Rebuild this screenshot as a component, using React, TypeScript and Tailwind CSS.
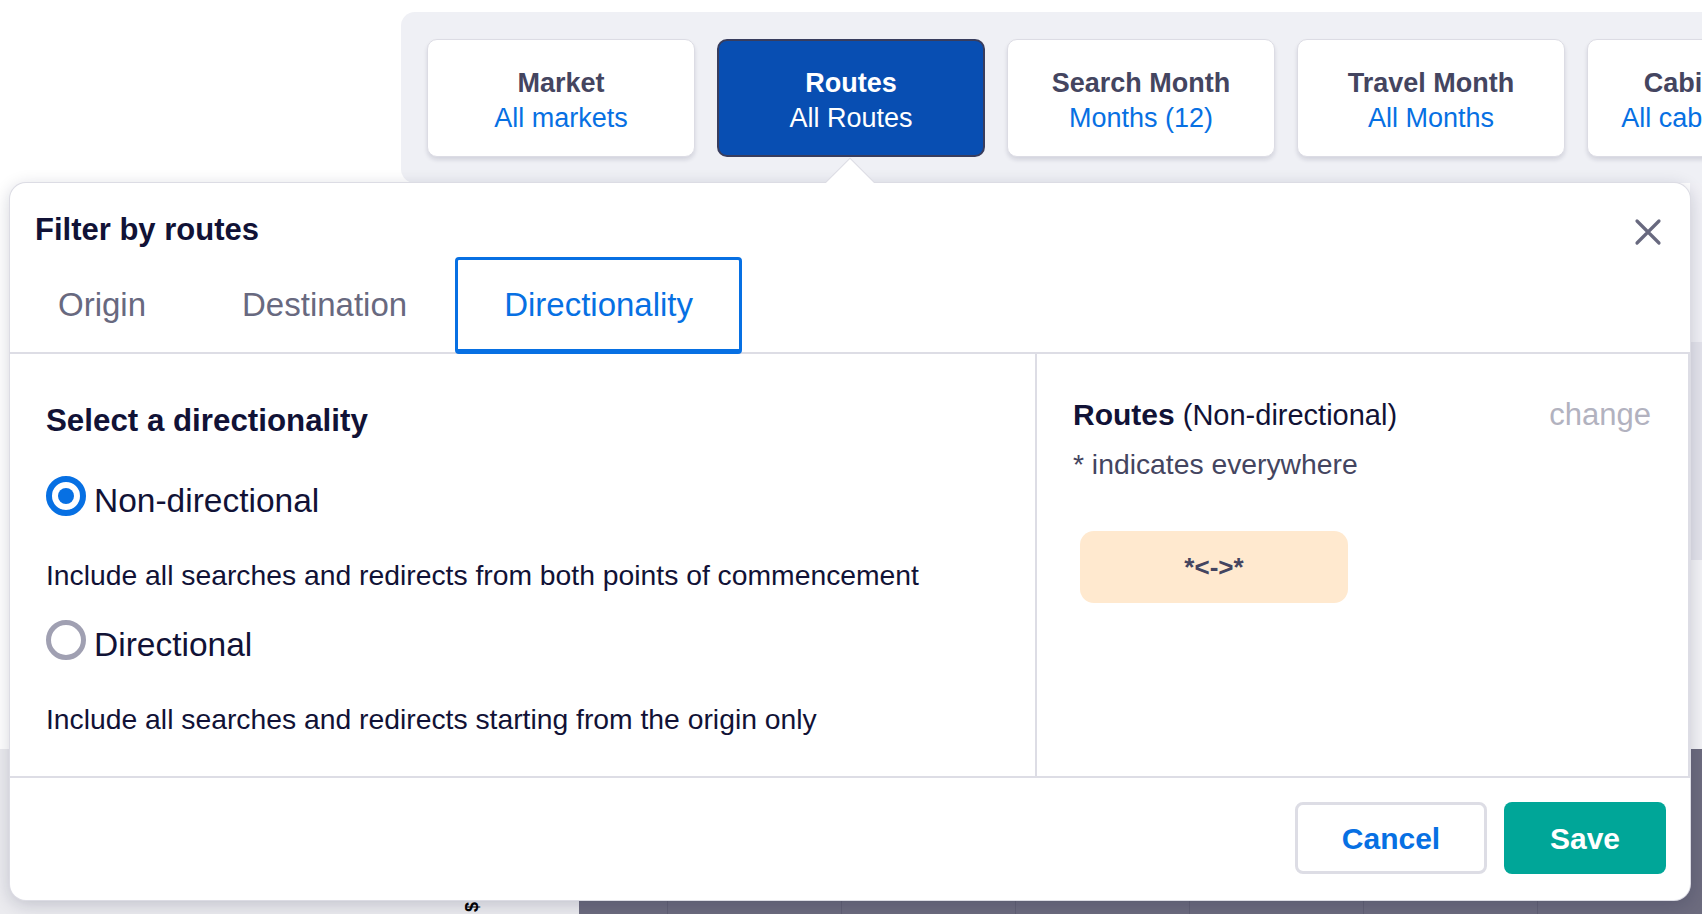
import React, { useState } from "react";

const FILTERS = [
  { title: "Market", value: "All markets" },
  { title: "Routes", value: "All Routes" },
  { title: "Search Month", value: "Months (12)" },
  { title: "Travel Month", value: "All Months" },
  { title: "Cabin Class", value: "All cabin classes" },
];

const TABS = ["Origin", "Destination", "Directionality"];

const OPTIONS = [
  {
    id: "non-directional",
    label: "Non-directional",
    description: "Include all searches and redirects from both points of commencement",
  },
  {
    id: "directional",
    label: "Directional",
    description: "Include all searches and redirects starting from the origin only",
  },
];

const FilterCard: React.FC<{ title: string; value: string; active?: boolean }> = ({
  title,
  value,
  active,
}) => (
  <div
    className={`shrink-0 w-[268px] h-[118px] rounded-[10px] flex flex-col items-center justify-center pt-[6px] text-[27px] leading-[35px] ${
      active
        ? "bg-[#084eb2] border-2 border-[#383d5e] text-white"
        : "bg-white border border-[#dcdce4] shadow-[0_3px_4px_rgba(17,18,54,0.12)]"
    }`}
  >
    <span className={`font-bold whitespace-nowrap ${active ? "text-white" : "text-[#444560]"}`}>
      {title}
    </span>
    <span className={`whitespace-nowrap ${active ? "text-white" : "text-[#0770e3]"}`}>{value}</span>
  </div>
);

const Radio: React.FC<{ checked: boolean }> = ({ checked }) =>
  checked ? (
    <span className="shrink-0 w-[40px] h-[40px] rounded-full border-[6px] border-[#0770e3] flex items-center justify-center">
      <span className="w-[16px] h-[16px] rounded-full bg-[#0770e3]" />
    </span>
  ) : (
    <span className="shrink-0 w-[40px] h-[40px] rounded-full border-[5px] border-[#a0a0b2]" />
  );

export default function App() {
  const [direction, setDirection] = useState("non-directional");
  const [tab, setTab] = useState("Directionality");

  return (
    <div className="relative w-[1702px] h-[914px] overflow-hidden bg-white font-['Liberation_Sans',Arial,sans-serif]">
      {/* page behind the popover */}
      <div className="flex flex-col h-full">
        <div className="flex h-[183px] pt-[12px] shrink-0">
          <div className="w-[401px] shrink-0" />
          <div className="flex-1 min-w-0 bg-[#eff0f5] rounded-l-[14px] flex gap-[22px] pl-[26px] pt-[27px] overflow-hidden">
            {FILTERS.map((f) => (
              <FilterCard key={f.title} title={f.title} value={f.value} active={f.title === "Routes"} />
            ))}
          </div>
        </div>
        <div className="flex h-[566px] shrink-0">
          <div className="flex-1 bg-white" />
          <div className="w-[12px] flex flex-col">
            <div className="h-[159px] bg-[#f0f0f5]" />
            <div className="h-[218px] bg-[#e3e3eb]" />
            <div className="flex-1 bg-[#f3f3f6]" />
          </div>
        </div>
        <div className="flex flex-1 min-h-0">
          <div className="w-[579px] shrink-0 bg-[#ebebef] flex justify-end items-end pr-[102px]">
            <span className="text-[18px] font-bold leading-none text-black -rotate-90 translate-y-[2px]">$</span>
          </div>
          <div className="flex-1 min-w-0 flex overflow-hidden bg-[#6c6b7e]">
            <div className="w-[88px] shrink-0" />
            {[0, 1, 2, 3, 4, 5].map((i) => (
              <div key={i} className="w-[174px] shrink-0 border-l border-[#616074]" />
            ))}
          </div>
        </div>
      </div>

      {/* routes popover */}
      <div className="absolute left-[10px] top-[183px] w-[1680px] h-[717px] bg-white rounded-[16px] shadow-[0_0_0_1px_#dcdce4,0_4px_18px_rgba(17,18,54,0.2)] flex flex-col">
        <div className="absolute left-[823px] -top-[17px] w-[34px] h-[34px] rotate-45 bg-white shadow-[-1px_-1px_0_#dcdce4]" />

        <div className="relative flex justify-between pl-[25px] pr-[28px] pt-[29px]">
          <h2 className="text-[31px] leading-[36px] font-bold text-[#111236]">Filter by routes</h2>
          <button className="mt-[6px] w-[28px] h-[28px]" aria-label="Close">
            <svg viewBox="0 0 28 28" className="w-[28px] h-[28px]">
              <path
                d="M3 3 L25 25 M25 3 L3 25"
                stroke="#68697f"
                strokeWidth="3.2"
                strokeLinecap="round"
                fill="none"
              />
            </svg>
          </button>
        </div>

        <div className="relative flex mt-[9px] h-[97px] border-b-2 border-[#dddde5]">
          {TABS.map((t) =>
            t === tab ? (
              <button
                key={t}
                onClick={() => setTab(t)}
                className="h-[97px] px-[46px] border-[3px] border-b-[5px] border-[#0770e3] rounded-[4px] text-[33px] text-[#0770e3]"
              >
                {t}
              </button>
            ) : (
              <button
                key={t}
                onClick={() => setTab(t)}
                className="h-[95px] px-[48px] text-[33px] text-[#68697f]"
              >
                {t}
              </button>
            )
          )}
        </div>

        <div className="flex h-[424px] border-b-2 border-[#dddde5]">
          <div className="w-[1025px] pl-[36px] pt-[49px] text-[#111236]">
            <h3 className="text-[31.3px] leading-[36px] font-bold">Select a directionality</h3>
            {OPTIONS.map((o, i) => (
              <div key={o.id} className={i === 0 ? "mt-[37px]" : "mt-[28px]"}>
                <button
                  onClick={() => setDirection(o.id)}
                  className="flex items-start gap-[8px] h-[40px]"
                >
                  <Radio checked={direction === o.id} />
                  <span className="mt-[8px] text-[33.5px] leading-[33px]">{o.label}</span>
                </button>
                <p className="mt-[42px] text-[28.3px] leading-[34px]">{o.description}</p>
              </div>
            ))}
          </div>

          <div className="flex-1 border-l-2 border-r-2 border-[#dddde5] pl-[36px] pr-[37px] pt-[43px]">
            <div className="flex justify-between items-baseline h-[36px]">
              <div className="text-[#111236] leading-[36px]">
                <span className="text-[30px] font-bold">Routes</span>
                <span className="text-[29px]"> (Non-directional)</span>
              </div>
              <span className="text-[31px] leading-[36px] text-[#b2b2bf]">change</span>
            </div>
            <p className="mt-[14px] text-[28.3px] leading-[34px] text-[#444560]">* indicates everywhere</p>
            <div className="mt-[50px] ml-[7px] w-[268px] h-[72px] rounded-[14px] bg-[#ffe9cf] flex items-center justify-center">
              <span className="text-[26px] font-semibold text-[#444560]">*&lt;-&gt;*</span>
            </div>
          </div>
        </div>

        <div className="flex justify-end items-start gap-[17px] pt-[24px] pr-[24px]">
          <button className="w-[192px] h-[72px] rounded-[8px] border-[3px] border-[#dddde5] text-[30px] font-bold text-[#0770e3]">
            Cancel
          </button>
          <button className="w-[162px] h-[72px] rounded-[8px] bg-[#00a698] text-[30px] font-bold text-white">
            Save
          </button>
        </div>
      </div>
    </div>
  );
}
